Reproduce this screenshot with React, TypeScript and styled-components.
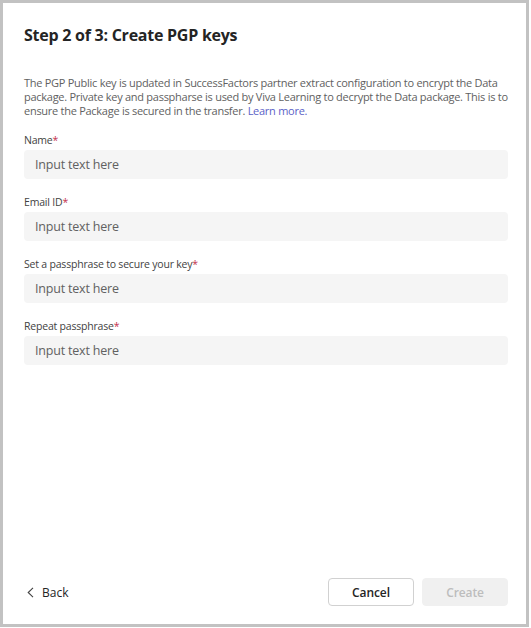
import React from "react";
import styled, { createGlobalStyle } from "styled-components";

const Global = createGlobalStyle`
  html, body { margin: 0; padding: 0; background: #ffffff; }
  * { box-sizing: border-box; }
`;

const FONT = `"Open Sans", "Noto Sans", "Liberation Sans", sans-serif`;

const Frame = styled.div`
  width: 529px;
  height: 627px;
  border: 3px solid #c2c2c2;
  background: #ffffff;
  display: flex;
  flex-direction: column;
  padding: 20px 18px 18px 21px;
  font-family: ${FONT};
  color: #242424;
`;

const Title = styled.h1`
  margin: 0;
  font-size: 16px;
  letter-spacing: -0.25px;
  line-height: 24px;
  font-weight: 700;
  color: #242424;
`;

const Description = styled.p`
  margin: 29px 0 0 0;
  font-size: 11px;
  letter-spacing: -0.27px;
  line-height: 14px;
  white-space: nowrap;
  color: #616161;
`;

const Link = styled.a`
  color: #5b5fc7;
  text-decoration: none;
`;

const Fields = styled.div`
  display: flex;
  flex-direction: column;
  gap: 15px;
  margin-top: 14px;
`;

const Field = styled.div`
  display: flex;
  flex-direction: column;
  gap: 2px;
`;

const Label = styled.label`
  font-size: 10.5px;
  letter-spacing: -0.2px;
  line-height: 16px;
  color: #424242;
`;

const Required = styled.span`
  color: #c4314b;
`;

const Input = styled.input`
  height: 29px;
  border: none;
  border-radius: 4px;
  background: #f5f5f5;
  padding: 0 11px;
  font-family: ${FONT};
  font-size: 12.5px;
  letter-spacing: -0.2px;
  color: #242424;
  outline: none;
  &::placeholder { color: #616161; }
`;

const Footer = styled.div`
  margin-top: auto;
  display: flex;
  align-items: center;
`;

const BackButton = styled.button`
  display: flex;
  align-items: center;
  gap: 8px;
  background: none;
  border: none;
  padding: 0 0 0 3px;
  font-family: ${FONT};
  font-size: 12px;
  color: #242424;
  cursor: pointer;
`;

const Spacer = styled.div`
  flex: 1;
`;

const Actions = styled.div`
  display: flex;
  gap: 8px;
`;

const ActionButton = styled.button<{ $primary?: boolean }>`
  width: 86px;
  height: 28px;
  border-radius: 4px;
  font-family: ${FONT};
  font-size: 12px;
  letter-spacing: -0.1px;
  font-weight: 600;
  border: ${(p) => (p.$primary ? "1px solid #f0f0f0" : "1px solid #d1d1d1")};
  background: ${(p) => (p.$primary ? "#f0f0f0" : "#ffffff")};
  color: ${(p) => (p.$primary ? "#bdbdbd" : "#242424")};
`;

const fields = [
  "Name",
  "Email ID",
  "Set a passphrase to secure your key",
  "Repeat passphrase",
];

export default function App() {
  return (
    <>
      <Global />
      <Frame>
        <Title>Step 2 of 3: Create PGP keys</Title>
        <Description>
          The PGP Public key is updated in SuccessFactors partner extract configuration to encrypt the Data
          <br />
          package. Private key and passpharse is used by Viva Learning to decrypt the Data package. This is to
          <br />
          ensure the Package is secured in the transfer. <Link href="#">Learn more.</Link>
        </Description>
        <Fields>
          {fields.map((f) => (
            <Field key={f}>
              <Label>
                {f}
                <Required>*</Required>
              </Label>
              <Input placeholder="Input text here" />
            </Field>
          ))}
        </Fields>
        <Footer>
          <BackButton>
            <svg width="7" height="11" viewBox="0 0 7 11" fill="none">
              <path d="M6 0.8 L1.2 5.5 L6 10.2" stroke="#424242" strokeWidth="1.1" />
            </svg>
            Back
          </BackButton>
          <Spacer />
          <Actions>
            <ActionButton>Cancel</ActionButton>
            <ActionButton $primary disabled>Create</ActionButton>
          </Actions>
        </Footer>
      </Frame>
    </>
  );
}
